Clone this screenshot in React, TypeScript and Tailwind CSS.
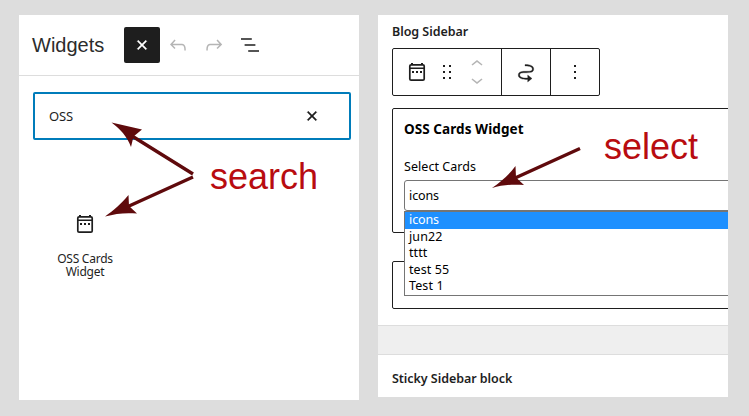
import React from "react";

const UNDO =
  "M18.3 11.7c-.6-.6-1.4-.9-2.3-.9H6.7l2.9-3.3-1.1-1-4.5 5L8.5 16l1-1-2.7-2.7H16c.5 0 .9.2 1.3.5 1 1 1 3.4 1 4.5v.3h1.5v-.2c0-1.5 0-4.3-1.5-5.7z";
const REDO =
  "M15.6 6.5l-1.1 1 2.9 3.3H8c-.9 0-1.7.3-2.3.9-1.4 1.5-1.4 4.2-1.4 5.6v.2h1.5v-.3c0-1.1 0-3.5 1-4.5.3-.3.7-.5 1.3-.5h9.2L14.5 15l1.1 1.1 4.6-4.6-4.6-5z";
const LIST = "M13.8 5.2H3v1.5h10.8V5.2zm-3.6 12v1.5H21v-1.5H10.2zm7.2-6H6.6v1.5h10.8v-1.5z";
const CLOSE =
  "M12 13.06l3.712 3.713 1.061-1.06L13.061 12l3.712-3.712-1.06-1.06L12 10.938 8.288 7.227l-1.061 1.06L10.939 12l-3.712 3.712 1.06 1.061L12 13.061z";
const DRAG =
  "M8 7h2V5H8v2zm0 6h2v-2H8v2zm0 6h2v-2H8v2zm6-14v2h2V5h-2zm0 8h2v-2h-2v2zm0 6h2v-2h-2v2z";
const UP = "M6.5 12.4L12 8l5.5 4.4-.9 1.2L12 10l-4.5 3.6-1-1.2z";
const DOWN = "M17.5 11.6L12 16l-5.5-4.4.9-1.2L12 14l4.5-3.6 1 1.2z";
const MORE = "M13 19h-2v-2h2v2zm0-6h-2v-2h2v2zm0-6h-2V5h2v2z";
const MOVE =
  "M19.75 9c0-1.257-.565-2.197-1.39-2.858-.797-.64-1.827-1.017-2.815-1.247-1.802-.42-3.703-.403-4.383-.396L11 4.5V6l.177-.001c.696-.006 2.416-.02 4.028.356.887.207 1.67.518 2.216.957.52.416.829.945.829 1.688 0 .592-.167.966-.407 1.23-.255.281-.656.508-1.236.674-1.19.34-2.82.346-4.607.346h-.077c-1.692 0-3.527 0-4.942.404-.732.209-1.424.545-1.935 1.108-.526.579-.796 1.33-.796 2.238 0 1.257.565 2.197 1.39 2.858.797.64 1.827 1.017 2.815 1.247 1.802.42 3.703.403 4.383.396L13 19.5h.714V22L18 18.5 13.714 15v3H13l-.177.001c-.696.006-2.416.02-4.028-.356-.887-.207-1.67-.518-2.216-.957-.52-.416-.829-.945-.829-1.688 0-.592.167-.966.407-1.23.255-.281.656-.508 1.237-.674 1.189-.34 2.819-.346 4.606-.346h.077c1.692 0 3.527 0 4.941-.404.732-.209 1.425-.545 1.936-1.108.526-.579.796-1.33.796-2.238z";

function Icon({ d, className = "" }: { d: string; className?: string }) {
  return (
    <svg viewBox="0 0 24 24" className={`size-6 shrink-0 fill-current ${className}`}>
      <path d={d} />
    </svg>
  );
}

function CalendarIcon() {
  return (
    <svg viewBox="0 0 24 24" className="size-6 shrink-0">
      <rect x="4.8" y="4.8" width="14.4" height="15.4" rx="1.3" fill="none" stroke="#1e1e1e" strokeWidth="1.7" />
      <path
        d="M6 3h2v2H6zM16 3h2v2h-2zM4.5 7.5h15v1.5h-15zM7 11h2v2H7zM11 11h2v2h-2zM15 11h2v2h-2z"
        fill="#1e1e1e"
      />
    </svg>
  );
}

function Annotations() {
  return (
    <svg viewBox="0 0 749 416" className="pointer-events-none absolute inset-0 h-[416px] w-[749px]">
      <g fill="#5f0a0c" stroke="#5f0a0c">
        <path d="M132 136L193 174M128 206.5L193 177M514 178.500L580 148.5" strokeWidth="3.4" />
        <path
          d="M111.5 122.5L142 129.5L133.5 136.5L131 147C127 136 120 129 111.5 122.5ZM105 216.5C114 210 121 204 128.5 195L129 206L137 213.5C125 212.5 116 213.5 105 216.5ZM492 188C501 181.5 508 176 515.5 166L516 177.5L524 185C512 184 502 185 492 188Z"
          stroke="none"
        />
      </g>
    </svg>
  );
}

const OPTIONS = ["jun22", "tttt", "test 55", "Test 1"];

export default function App() {
  return (
    <div className="relative flex h-[416px] w-[749px] items-start overflow-hidden bg-[#dddddd] pt-[15px] pl-[19px] font-['Noto_Sans',sans-serif] text-[#1e1e1e]">
      <section className="h-[385px] w-[340px] bg-white">
        <header className="flex h-[61px] items-center border-b border-[#dddddd] pl-[13px]">
          <h1 className="w-[92px] font-['Liberation_Sans',sans-serif] text-[20px] leading-6 text-[#2c2c2c]">Widgets</h1>
          <button className="flex size-9 items-center justify-center rounded-[2px] bg-[#1e1e1e] text-white">
            <Icon d={CLOSE} className="stroke-current stroke-[0.4]" />
          </button>
          <div className="flex gap-3 pl-1.5">
            <Icon d={UNDO} className="text-[#b5b5b5]" />
            <Icon d={REDO} className="text-[#b5b5b5]" />
            <Icon d={LIST} />
          </div>
        </header>
        <div className="mt-4 ml-[14px] flex h-12 w-[318px] items-center justify-between rounded-[2px] border-2 border-[#007cba] pr-[25px] pl-3.5">
          <span className="pt-0.5 text-[13px] tracking-[-0.2px]">OSS</span>
          <Icon d={CLOSE} className="stroke-current stroke-[0.4]" />
        </div>
        <div className="mt-[37px] flex h-[130px]">
          <div className="flex w-[132px] flex-col items-center pt-[35px]">
            <CalendarIcon />
            <p className="mt-[16px] text-center text-[12px] leading-[13px] tracking-[-0.25px]">
              OSS Cards
              <br />
              Widget
            </p>
          </div>
          <p className="-mt-[20px] ml-[59px] font-['Liberation_Sans',sans-serif] text-[36px] leading-10 text-[#b80c10]">search</p>
        </div>
      </section>

      <section className="ml-[19px] h-[382px] w-[350px] overflow-hidden bg-white">
        <div className="h-[311px] border-b border-[#dddddd] pt-[7px] pl-3.5">
          <h2 className="h-[26px] text-[12.5px] leading-[19px] font-semibold tracking-[-0.05px]">Blog Sidebar</h2>
          <div className="flex h-12 w-[208px] rounded-[2px] border border-[#1e1e1e]">
            <div className="flex w-[109px] items-center border-r border-[#1e1e1e] pl-3">
              <CalendarIcon />
              <Icon d={DRAG} className="ml-1.5" />
              <div className="ml-1.5 flex flex-col text-[#b5b5b5]">
                <Icon d={UP} className="-mb-1" />
                <Icon d={DOWN} className="-mt-1" />
              </div>
            </div>
            <div className="flex w-[49px] items-center justify-center border-r border-[#1e1e1e]">
              <Icon d={MOVE} className="stroke-current stroke-[0.3]" />
            </div>
            <div className="flex flex-1 items-center justify-center">
              <Icon d={MORE} />
            </div>
          </div>
          <div className="mt-3 h-[125px] w-[360px] rounded-[2px] border border-[#1e1e1e] pt-[11px] pl-[11px] text-black">
            <div className="flex h-[60px] justify-between">
              <div>
                <h3 className="text-[13.5px] leading-[19px] font-bold tracking-[0.07px]">OSS Cards Widget</h3>
                <p className="mt-[19px] text-[12.5px] leading-[18px] tracking-[0.05px]">Select Cards</p>
              </div>
              <p className="mt-[7px] mr-[53px] font-['Liberation_Sans',sans-serif] text-[36px] leading-10 text-[#b80c10]">select</p>
            </div>
            <div className="relative h-[31px] rounded-[3px] border border-[#757575] pl-1 text-[12.5px] leading-[29px] tracking-[-0.1px]">
              icons
              <ul className="absolute top-[30px] -left-px h-[85px] w-[360px] border border-[#757575] bg-white text-[12.5px] leading-[16.5px]">
                <li className="h-[17px] bg-[#1e90ff] pl-1 text-white">icons</li>
                {OPTIONS.map((o) => (
                  <li key={o} className="h-[16.4px] pl-1 leading-[16px] tracking-[0.1px]">
                    {o}
                  </li>
                ))}
              </ul>
            </div>
          </div>
          <div className="mt-7 h-12 w-[360px] rounded-[2px] border border-[#1e1e1e]" />
        </div>
        <div className="h-[29px] border-b border-[#dddddd] bg-[#efefef]" />
        <h2 className="pt-[14px] pl-3.5 text-[12.5px] leading-[19px] font-semibold tracking-[-0.05px]">Sticky Sidebar block</h2>
      </section>
      <Annotations />
    </div>
  );
}
